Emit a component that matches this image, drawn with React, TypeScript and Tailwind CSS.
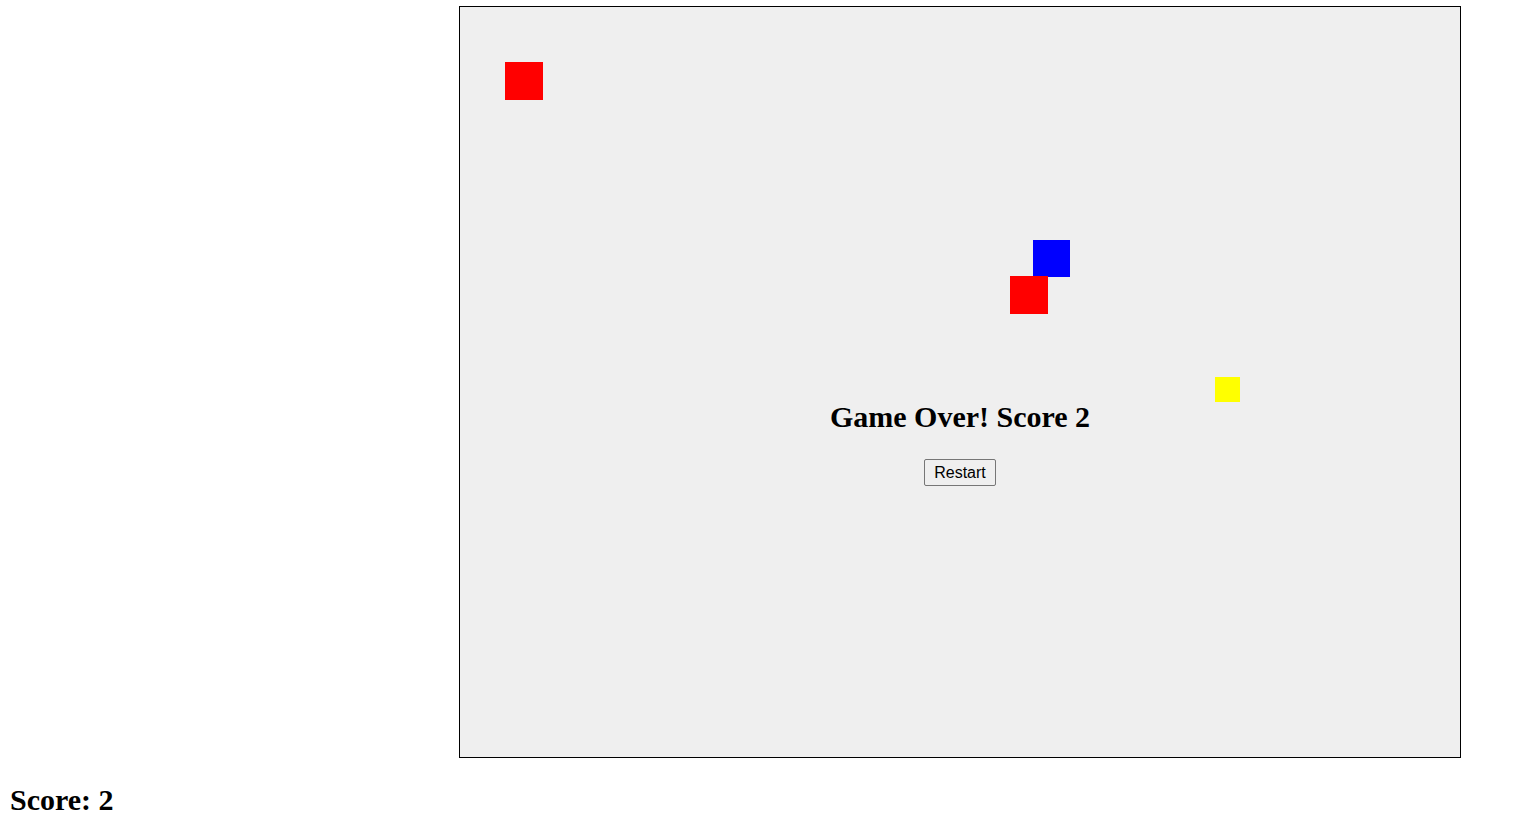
import React from 'react';

type Block = { x: number; y: number; size: number; color: string };

// positions relative to the inner play field
const blocks: Block[] = [
  { x: 45, y: 55, size: 37.5, color: 'bg-[#ff0000]' },
  { x: 572.5, y: 232.5, size: 37.5, color: 'bg-[#0000ff]' },
  { x: 550, y: 269, size: 37.5, color: 'bg-[#ff0000]' },
  { x: 755, y: 370, size: 25, color: 'bg-[#ffff00]' },
];

export default function App() {
  const score = 2;

  return (
    <div className="min-h-screen bg-white font-['Liberation_Serif','Times_New_Roman',serif] text-black">
      <div className="ml-[459px] pt-[6px]">
        <div className="relative w-[1002px] h-[752px] border border-black bg-[#efefef] overflow-hidden">
          {blocks.map((b, i) => (
            <div
              key={i}
              className={`absolute ${b.color}`}
              style={{ left: b.x, top: b.y, width: b.size, height: b.size }}
            />
          ))}

          {/* Game over overlay */}
          <div className="absolute left-0 right-0 top-[393px] flex flex-col items-center">
            <h2 className="text-[30px] font-bold leading-[33px] m-0">Game Over! Score {score}</h2>
            <button className="mt-[26px] px-[9px] h-[27px] text-[16px] font-['Liberation_Sans',Arial,sans-serif] text-black bg-[#efefef] border border-[#767676] rounded-[2px]">
              Restart
            </button>
          </div>
        </div>
      </div>

      <h2 className="ml-[10px] mt-[25px] text-[30px] font-bold leading-[33px]">Score: {score}</h2>
    </div>
  );
}
